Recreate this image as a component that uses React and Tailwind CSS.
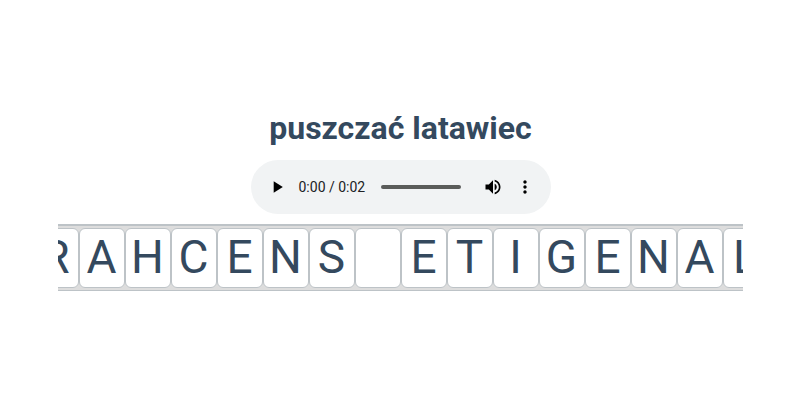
import React, { useState } from 'react';

const letters = ['R', 'A', 'H', 'C', 'E', 'N', 'S', '', 'E', 'T', 'I', 'G', 'E', 'N', 'A', 'L'];

const AudioPlayer = () => {
    const [position, setPosition] = useState(0);

    return (
        <div className="flex h-[54px] w-[300px] items-center rounded-full bg-[#f1f3f4] px-[10px] text-black">
            <button type="button" aria-label="Play" className="flex size-8 shrink-0 items-center justify-center">
                <svg viewBox="0 0 24 24" className="size-5" fill="currentColor">
                    <path d="M8 5v14l11-7z" />
                </svg>
            </button>
            <span className="ml-[6px] w-[82px] shrink-0 whitespace-nowrap text-[14px] leading-[20px] text-[#202124]">
                0:00 / 0:02
            </span>
            <input
                type="range"
                aria-label="Position"
                min="0"
                max="2"
                step="0.01"
                value={position}
                onChange={(e) => setPosition(Number(e.target.value))}
                className="h-1 w-20 shrink-0 appearance-none rounded-full bg-[#5a5c5a] [&::-webkit-slider-thumb]:size-0 [&::-webkit-slider-thumb]:appearance-none"
            />
            <button type="button" aria-label="Mute" className="ml-4 flex size-8 shrink-0 items-center justify-center">
                <svg viewBox="0 0 24 24" className="size-5" fill="currentColor">
                    <path d="M3 9v6h4l5 5V4L7 9H3zm13.5 3c0-1.77-1.02-3.29-2.5-4.03v8.05c1.48-.73 2.5-2.25 2.5-4.02zM14 3.23v2.06c2.89.86 5 3.54 5 6.71s-2.11 5.85-5 6.71v2.06c4.01-.91 7-4.49 7-8.77s-2.99-7.86-7-8.77z" />
                </svg>
            </button>
            <button type="button" aria-label="More options" className="flex size-8 shrink-0 items-center justify-center">
                <svg viewBox="0 0 24 24" className="size-5" fill="currentColor">
                    <path d="M12 8c1.1 0 2-.9 2-2s-.9-2-2-2-2 .9-2 2 .9 2 2 2zm0 2c-1.1 0-2 .9-2 2s.9 2 2 2 2-.9 2-2-.9-2-2-2zm0 6c-1.1 0-2 .9-2 2s.9 2 2 2 2-.9 2-2-.9-2-2-2z" />
                </svg>
            </button>
        </div>
    );
};

const LetterStrip = () => (
    <div className="w-full overflow-hidden border-t-2 border-b border-[#bdc3c7] bg-[#dddddd] py-[2px]">
        {/* the strip is scrolled a bit, so the outer tiles are cut off */}
        <div className="-ml-[25px] flex">
            {letters.map((letter, index) => (
                <div
                    key={index}
                    className="flex h-[60px] w-[46px] shrink-0 items-center justify-center rounded-md border border-[#bdc3c7] bg-white pr-px pb-[2px] text-[46px] leading-[54px]"
                >
                    {letter}
                </div>
            ))}
        </div>
    </div>
);

const App = () => {
    return (
        <main className="flex min-h-screen flex-col items-center bg-white pt-[108px] pr-[57px] pl-[58px] font-['Roboto',sans-serif] text-[#34495e]">
            <h1 className="mb-3 text-[32px] leading-[40px] font-bold">puszczać latawiec</h1>
            <AudioPlayer />
            <div className="mt-[10px] w-full">
                <LetterStrip />
            </div>
        </main>
    );
};

export default App;
